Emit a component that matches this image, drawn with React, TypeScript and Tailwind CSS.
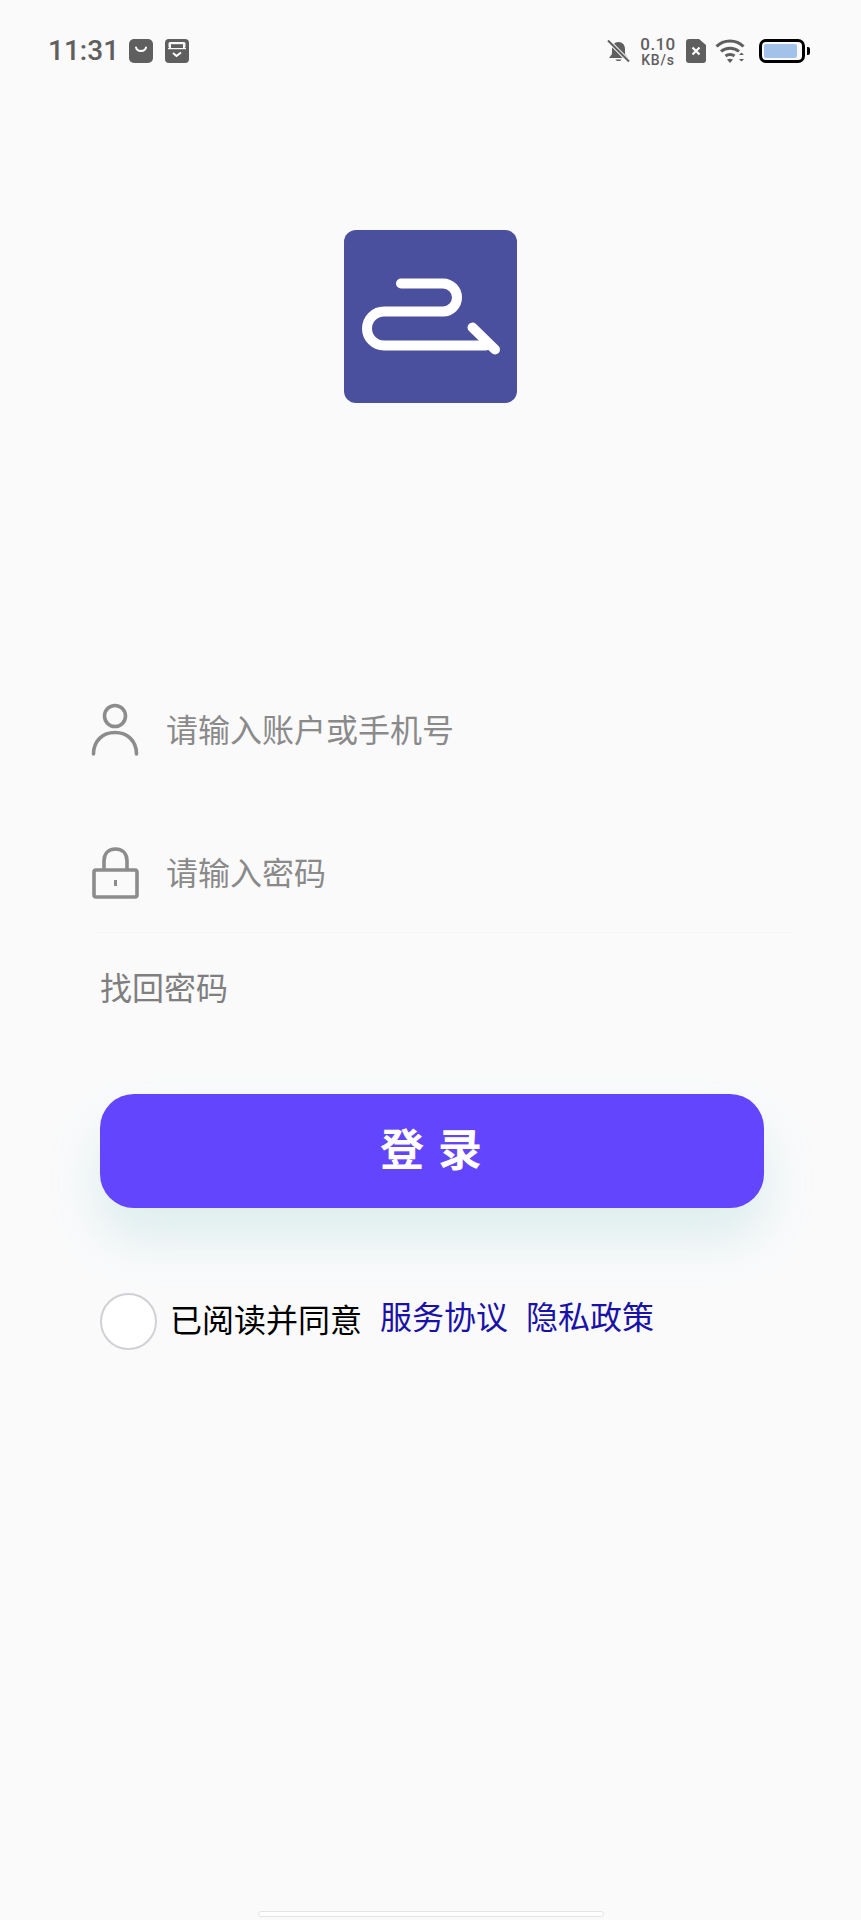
import type { ReactNode } from 'react';

const cjk = "font-['Noto_Sans_CJK_SC','Noto_Sans',sans-serif]";

function StatusBar() {
  return (
    <div className="h-[102px] flex items-center justify-between pl-[48px] pr-[51px] text-[#5f5f5f]">
      <div className="flex items-center">
        <span className="font-['Roboto',sans-serif] font-medium text-[28px] leading-none w-[81px]">11:31</span>
        <svg className="w-[24px] h-[24px]" viewBox="0 0 24 24">
          <rect width="24" height="24" rx="5" fill="#5f5f5f" />
          <path d="M7 8.500c1 4.500 9 4.500 10 0" fill="none" stroke="#fff" strokeWidth="2" strokeLinecap="round" />
        </svg>
        <svg className="w-[24px] h-[24px] ml-[12px]" viewBox="0 0 24 24">
          <rect width="24" height="24" rx="4" fill="#5f5f5f" />
          <rect x="3.500" y="3" width="17" height="6" rx="1.500" fill="#fafafc" />
          <rect x="6" y="5.200" width="12" height="3.800" fill="#5f5f5f" />
          <rect x="3" y="9" width="18" height="1.200" fill="#fafafc" />
          <path d="M8 14l3.500 3 4.500-3.500" fill="none" stroke="#fff" strokeWidth="2" />
        </svg>
      </div>
      <div className="flex items-center">
        <svg className="w-[23px] h-[24px]" viewBox="0 0 23 24">
          <path d="M11.500 3c4 0 6.500 3 6.500 7v5l3 4H2l3-4v-5c0-4 2.500-7 6.500-7z" fill="#5f5f5f" />
          <path d="M8.500 20.500h6c-.5 2-5.500 2-6 0z" fill="#5f5f5f" />
          <path d="M1 1.500l21 21" stroke="#fafafb" strokeWidth="4" />
          <path d="M1 1.500l21 21" stroke="#5f5f5f" strokeWidth="2" />
        </svg>
        <div className="ml-[10px] w-[36px] flex flex-col items-center font-['Roboto',sans-serif] font-medium leading-none">
          <span className="text-[17px] h-[16px] tracking-[0.4px]">0.10</span>
          <span className="text-[14px] mt-[1px] tracking-[0.8px]">KB/s</span>
        </div>
        <svg className="w-[20px] h-[24px] ml-[10px]" viewBox="0 0 20 24">
          <path d="M3 0h10l7 6v15a3 3 0 0 1-3 3H3a3 3 0 0 1-3-3V3a3 3 0 0 1 3-3z" fill="#5f5f5f" />
          <path d="M6.500 8.500l7 7M13.500 8.500l-7 7" stroke="#fff" strokeWidth="2.200" />
        </svg>
        <svg className="w-[30px] h-[24px] ml-[9px]" viewBox="0 0 30 24" fill="none" stroke="#5f5f5f" strokeWidth="3">
          <path d="M1.500 7.500c7-7.500 20-7.500 27 0" />
          <path d="M6 12.500c5-4.500 13-4.500 18 0" />
          <path d="M10.500 17c2.500-2 6.500-2 9 0" />
          <path d="M15 24l-3-3.500c2-1 4-1 6 0z" fill="#5f5f5f" stroke="none" />
          <path d="M24 16l2.500-2.500 2.500 2.500zM24 20l2.500 2.500 2.500-2.500z" fill="#5f5f5f" stroke="none" />
        </svg>
        <div className="ml-[14px] flex items-center">
          <div className="w-[46px] h-[24px] rounded-[7px] border-[3px] border-black p-[2px] bg-[#fafafb]">
            <div className="w-[33px] h-full rounded-[2px] bg-[#a3c2ea]" />
          </div>
          <div className="w-[3px] h-[8px] ml-[2px] rounded-r-[2px] bg-black" />
        </div>
      </div>
    </div>
  );
}

function Logo() {
  return (
    <div className="mt-[128px] mx-auto w-[173px] h-[173px] rounded-[12px] bg-[#4a4f9e]">
      <svg className="w-full h-full" viewBox="0 0 173 173" fill="none" stroke="#fff" strokeWidth="10" strokeLinecap="round" strokeLinejoin="round">
        <path d="M57 53.500h42a14 14 0 0 1 0 28H40a17 17 0 0 0 0 34h102" />
        <path d="M128.500 97.500l22.500 22" />
      </svg>
    </div>
  );
}

function UserIcon() {
  return (
    <svg className="w-[48px] h-[54px]" viewBox="0 0 48 54" fill="none" stroke="#8c8c8c" strokeWidth="3.600" strokeLinecap="round">
      <circle cx="24" cy="13" r="10.500" />
      <path d="M2.500 51c0-13 9-21.500 21.500-21.500S45.500 38 45.500 51" />
    </svg>
  );
}

function LockIcon() {
  return (
    <svg className="w-[48px] h-[54px]" viewBox="0 0 48 54" fill="none" stroke="#8c8c8c" strokeWidth="3.600">
      <path d="M13 24v-9c0-7 4-12 11.500-12S36 8 36 15v9" />
      <rect x="3" y="24" width="43" height="27" rx="2" />
      <path d="M24.500 34v6" strokeWidth="3" />
    </svg>
  );
}

function FieldRow({ icon, label }: { icon: ReactNode; label: string }) {
  return (
    <div className="h-[60px] flex items-center">
      <div className="w-[75px]">{icon}</div>
      <span className="-mt-[4px] text-[32px] leading-none text-[#8a8a8a]">{label}</span>
    </div>
  );
}

export default function App() {
  return (
    <div className={`relative h-[1920px] flex flex-col overflow-hidden bg-[#fafafb] ${cjk}`}>
      <StatusBar />
      <Logo />

      <div className="mt-[297px] pl-[91px]">
        <FieldRow icon={<UserIcon />} label="请输入账户或手机号" />
      </div>
      <div className="mt-[83px] pl-[91px]">
        <FieldRow icon={<LockIcon />} label="请输入密码" />
      </div>

      <div className="mt-[29px] ml-[97px] mr-[70px] h-[1px] bg-[#f4f4f5]" />

      <div className="mt-[29px] pl-[100px] text-[32px] leading-[48px] text-[#7f7f7f]">找回密码</div>

      <button className="mt-[84px] ml-[100px] w-[664px] h-[114px] rounded-[34px] bg-[#6445fe] text-white text-[44px] font-bold tracking-[2px] pb-[8px] shadow-[0_30px_50px_rgba(120,195,190,0.22)]">
        登 录
      </button>

      <div className="mt-[85px] pl-[100px] flex items-center">
        <div className="w-[57px] h-[57px] rounded-full border-2 border-[#d2d0d4] bg-white" />
        <span className="ml-[13px] -mt-[8px] text-[32px] leading-none text-black">已阅读并同意</span>
        <span className="ml-[18px] -mt-[14px] text-[32px] leading-none text-[#1a12a8]">服务协议</span>
        <span className="ml-[18px] -mt-[14px] text-[32px] leading-none text-[#1a12a8]">隐私政策</span>
      </div>

      <div className="mt-auto mb-[3px] mx-auto w-[346px] h-[6px] rounded-full border border-[#e4e4e6] bg-white" />
    </div>
  );
}
